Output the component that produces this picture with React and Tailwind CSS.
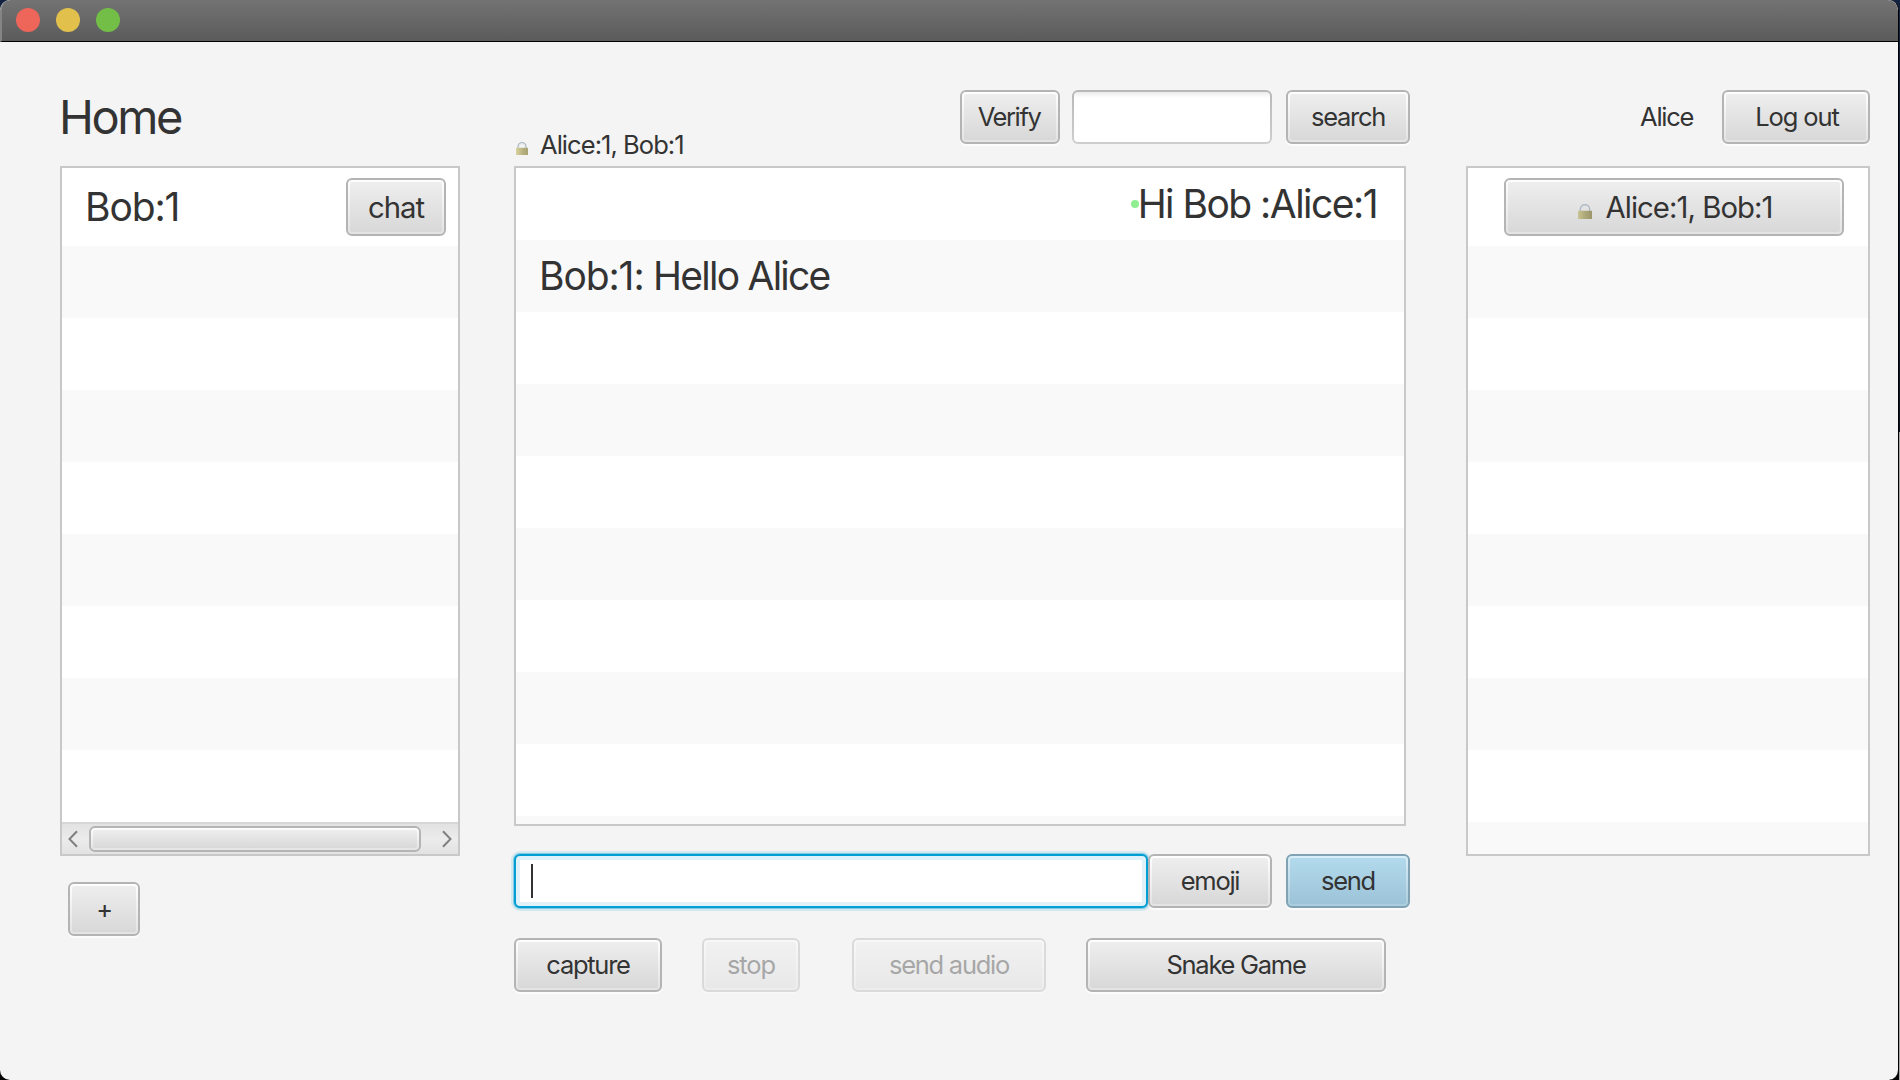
function Button({ children, className = "", tone = "gray", shadow = true }) {
  const outer =
    tone === "blue"
      ? "border-[#7fa3b5] from-[#dceff8] to-[#a9cbdc]"
      : "border-[#b4b4b4] from-white to-[#e2e2e2]";
  const inner = tone === "blue" ? "from-[#b2daec] to-[#9cc3d7]" : "from-[#eeeeee] to-[#d8d8d8]";
  const glow = shadow ? "shadow-[0_2px_0_rgba(255,255,255,0.75)]" : "";
  return (
    <button
      type="button"
      className={`box-border flex shrink-0 rounded-[6px] border-2 bg-linear-to-b bg-origin-border p-[2px] whitespace-nowrap ${outer} ${glow} ${className}`}
    >
      <span className={`flex h-full w-full items-center justify-center rounded-[2px] bg-linear-to-b ${inner}`}>
        {children}
      </span>
    </button>
  );
}

function Lock({ className, dim = false }) {
  return (
    <svg viewBox="0 0 12 13" preserveAspectRatio="none" className={className}>
      <defs>
        <linearGradient id={dim ? "lockDim" : "lock"} x1="0" x2="1" y1="0" y2="0">
          <stop offset="0" stopColor={dim ? "#c9c494" : "#d8d3a0"} />
          <stop offset="0.2" stopColor={dim ? "#bdb886" : "#cbc692"} />
          <stop offset="0.55" stopColor={dim ? "#aca678" : "#b8b281"} />
          <stop offset="1" stopColor={dim ? "#9a9468" : "#a8a274"} />
        </linearGradient>
      </defs>
      <path d="M2 6.5 V4.6 a4 4 0 0 1 8 0 V6.5" fill="none" stroke="#b0bac5" strokeWidth="1.3" />
      <path d="M3.1 6.5 V4.8 a2.9 2.9 0 0 1 5.8 0 V6.5" fill="none" stroke="#dfe3e8" strokeWidth="0.7" />
      <rect x="0" y="5.8" width="12" height="7.2" rx="0.5" fill={`url(#${dim ? "lockDim" : "lock"})`} />
    </svg>
  );
}

function Rows({ count, firstOdd }) {
  return Array.from({ length: count }, (_, i) => (
    <div key={i} className={`h-[72px] shrink-0 ${(i % 2 === 0) === firstOdd ? "bg-[#f9f9f9]" : "bg-white"}`} />
  ));
}

function LeftColumn() {
  return (
    <div className="ml-[60px] flex w-[400px] shrink-0 flex-col">
      <div className="h-[124px] pt-[47px]">
        <h1 className="-ml-px text-[47px] leading-[56px] tracking-[-2.4px]">Home</h1>
      </div>
      <div className="flex h-[690px] flex-col overflow-hidden border-2 border-[#c8c8c8] bg-white">
        <div className="flex h-[654px] shrink-0 flex-col overflow-hidden">
          <div className="flex h-[78px] shrink-0 items-center justify-between bg-white pr-[12px] pl-[23px]">
            <span className="pb-[2px] text-[39px] leading-none tracking-[-1.1px]">Bob:1</span>
            <Button className="h-[58px] w-[100px] text-[29.3px] tracking-[-1px]" shadow={false}>
              <span className="pt-[2px]">chat</span>
            </Button>
          </div>
          <Rows count={8} firstOdd />
        </div>
        <div className="flex h-[32px] shrink-0 items-center border-t-2 border-[#d6d6d6] bg-linear-to-b from-[#e2e2e2] via-[#ececec] to-[#e2e2e2] pr-[6px] pl-[6px]">
          <svg viewBox="0 0 10 18" className="h-[18px] w-[10px] shrink-0" fill="none">
            <path d="M9 1.2 L1.5 9 L9 16.8" stroke="#808080" strokeWidth="2" />
          </svg>
          <div className="ml-[11px] box-border h-[26px] w-[332px] shrink-0 rounded-[6px] border-2 border-[#b4b4b4] bg-linear-to-b from-white to-[#e2e2e2] bg-origin-border p-[2px]">
            <div className="h-full rounded-[2px] bg-linear-to-b from-[#eeeeee] to-[#d8d8d8]" />
          </div>
          <svg viewBox="0 0 10 18" className="ml-auto h-[18px] w-[10px] shrink-0" fill="none">
            <path d="M1 1.2 L8.5 9 L1 16.8" stroke="#808080" strokeWidth="2" />
          </svg>
        </div>
      </div>
      <Button className="mt-[26px] ml-[8px] h-[54px] w-[72px]">+</Button>
    </div>
  );
}

function CenterColumn() {
  return (
    <div className="ml-[54px] flex w-[896px] shrink-0 flex-col">
      <div className="flex h-[124px]">
        <div className="flex h-full items-end pl-[2px]">
          <Lock className="mb-[11px] h-[13px] w-[12px]" />
          <span className="ml-[12px] leading-[42px] tracking-[-0.95px] whitespace-nowrap">Alice:1, Bob:1</span>
        </div>
        <div className="ml-auto flex pt-[48px]">
          <Button className="h-[54px] w-[100px] tracking-[-1.4px]">
            <span className="pr-[2px]">Verify</span>
          </Button>
          <div className="ml-[12px] h-[54px] w-[200px] rounded-[6px] bg-linear-to-b from-[#b8b8b8] to-[#cecece] p-[2px]">
            <div className="h-full rounded-[4px] bg-linear-to-b from-[#ececec] via-white via-[12%] to-white" />
          </div>
          <Button className="ml-[14px] h-[54px] w-[124px]">search</Button>
        </div>
      </div>
      <div className="flex h-[660px] w-[892px] flex-col overflow-hidden border-2 border-[#c8c8c8] bg-white text-[39px] leading-none">
        <div className="flex h-[72px] shrink-0 items-center justify-end bg-white pr-[27px]">
          <i className="-mr-px h-[8px] w-[8px] rounded-full bg-[#90ee90]" />
          <span className="pb-[2px] tracking-[-1.53px]">Hi Bob :Alice:1</span>
        </div>
        <div className="flex h-[72px] shrink-0 items-center bg-[#f9f9f9] pl-[23px]">
          <span className="pb-[2px] tracking-[-1.1px]">Bob:1:</span>
          <span className="pb-[2px] pl-[9.5px] tracking-[-1.75px]">Hello Alice</span>
        </div>
        <Rows count={8} firstOdd={false} />
      </div>
      <div className="mt-[28px] flex">
        <div className="flex h-[54px] w-[634px] rounded-[6px] border-2 border-[#039ed3] bg-[#dff1f9] p-[4px] shadow-[0_0_0_1px_rgba(3,158,211,0.4),0_0_0_3px_rgba(3,158,211,0.13)]">
          <div className="flex flex-1 items-center bg-white pl-[11px]">
            <div className="h-[34px] w-[2px] bg-[#333333]" />
          </div>
        </div>
        <Button className="h-[54px] w-[124px]">emoji</Button>
        <Button className="ml-[14px] h-[54px] w-[124px]" tone="blue">
          send
        </Button>
      </div>
      <div className="mt-[30px] flex">
        <Button className="h-[54px] w-[148px]">capture</Button>
        <Button className="ml-[40px] h-[54px] w-[98px] tracking-[-1.1px] opacity-40">stop</Button>
        <Button className="ml-[52px] h-[54px] w-[194px] opacity-40">send audio</Button>
        <Button className="ml-[40px] h-[54px] w-[300px]">Snake Game</Button>
      </div>
    </div>
  );
}

function RightColumn() {
  return (
    <div className="ml-[56px] flex w-[404px] shrink-0 flex-col">
      <div className="flex h-[124px] items-start justify-end pt-[48px]">
        <span className="mr-[29px] leading-[54px] tracking-[-1.3px]">Alice</span>
        <Button className="h-[54px] w-[148px] tracking-[-1.07px]">
          <span className="pl-[2px]">Log out</span>
        </Button>
      </div>
      <div className="flex h-[690px] flex-col overflow-hidden border-2 border-[#c8c8c8] bg-white">
        <div className="flex h-[78px] shrink-0 items-center bg-white pl-[36px]">
          <Button className="h-[58px] w-[340px] text-[29.3px] tracking-[-0.95px]" shadow={false}>
            <Lock dim className="mt-[8px] ml-[2px] h-[15px] w-[14px]" />
            <span className="ml-[14px] pt-[2px]">Alice:1, Bob:1</span>
          </Button>
        </div>
        <Rows count={9} firstOdd />
      </div>
    </div>
  );
}

export default function App() {
  return (
    <div className="h-[1080px] w-[1900px] overflow-hidden bg-linear-to-b from-[#14233f] from-0% via-[#0b1220] via-40% to-[#050505] to-100%">
      <div className="flex h-full w-full bg-linear-to-b from-transparent from-40% to-[#a8a8a8] to-40% bg-[length:1px_100%] bg-right bg-no-repeat">
        <div className="flex h-[1080px] w-[1899px] flex-col overflow-hidden rounded-[10px] border-r border-black bg-[#f4f4f4] font-[Inter,sans-serif] text-[25.5px] tracking-[-1.27px] text-[#333333]">
          <div className="flex h-[42px] shrink-0 items-center gap-[16px] rounded-t-[10px] border-b border-l-2 border-b-black border-l-[#858585] bg-linear-to-b from-[#737374] to-[#5b5b5c] pb-px pl-[14px]">
            <i className="h-[24px] w-[24px] rounded-full bg-[#ee6559]" />
            <i className="h-[24px] w-[24px] rounded-full bg-[#e1c04c]" />
            <i className="h-[24px] w-[24px] rounded-full bg-[#72be47]" />
          </div>
          <div className="flex flex-1">
            <LeftColumn />
            <CenterColumn />
            <RightColumn />
          </div>
        </div>
      </div>
    </div>
  );
}
